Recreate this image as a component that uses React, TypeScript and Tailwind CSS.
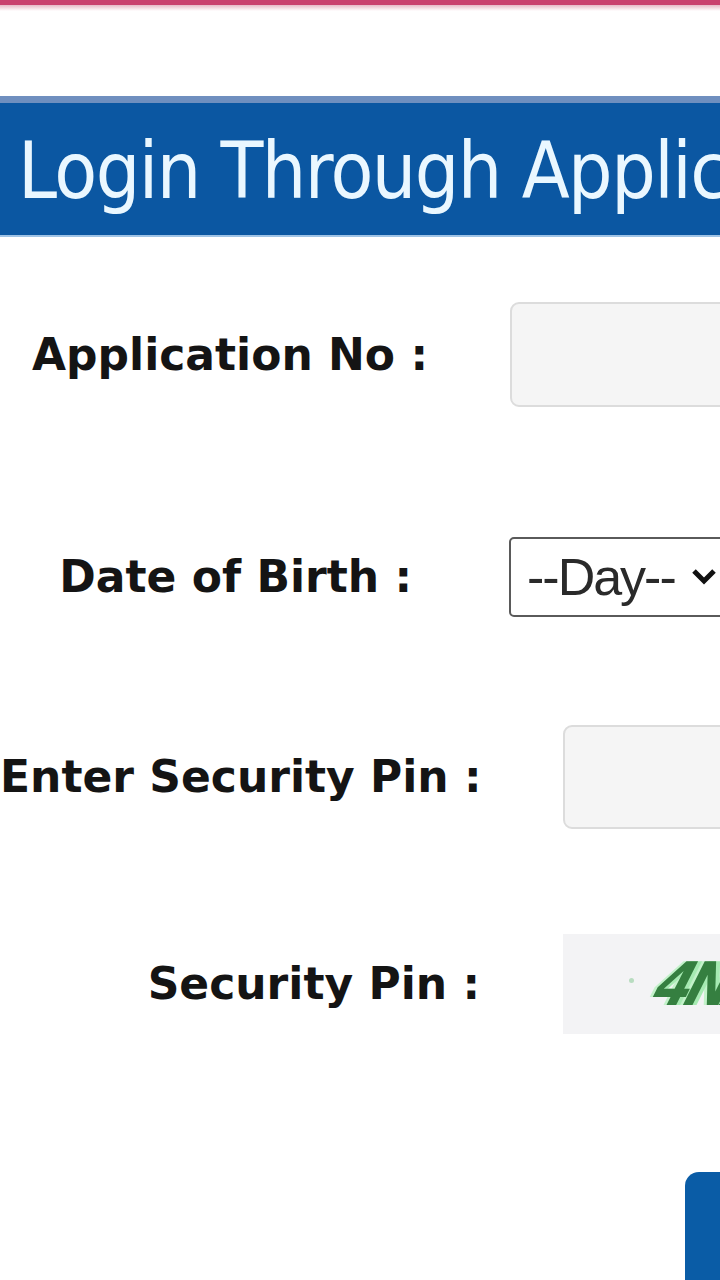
const labelFont = { fontFamily: '"DejaVu Sans", Verdana, sans-serif' };

const Label = ({ text, width }: { text: string; width: string }) => (
    <div className={`${width} shrink-0 text-right font-bold text-[44px] leading-none text-[#141414] whitespace-nowrap`} style={labelFont}>
        {text}
    </div>
);

export default function App() {
    return (
        <div className="w-[720px] h-[1280px] overflow-hidden bg-white flex flex-col">
            <div className="h-[5px] shrink-0 bg-[#c9406e]" />
            <div className="h-[6px] shrink-0 bg-gradient-to-b from-[#e6b8c6] to-white" />

            <div className="mt-[85px] h-[141px] shrink-0 bg-[#0b57a2] border-t-[7px] border-t-[#6f8fbf] border-b-[2px] border-b-[#9fc3e6] flex items-center pl-[18px] overflow-hidden">
                <span
                    className="text-[#eaf7ff] text-[78px] leading-none whitespace-nowrap tracking-[-1.5px] pt-[4px]"
                    style={{ fontFamily: '"DejaVu Sans Condensed", "DejaVu Sans", Verdana, sans-serif', fontStretch: 'condensed' }}
                >
                    Login Through Application No
                </span>
            </div>

            <div className="mt-[65px] h-[105px] shrink-0 flex items-center">
                <Label text="Application No :" width="w-[428px]" />
                <div className="ml-[82px] w-[300px] h-full shrink-0 rounded-[9px] border-[2px] border-[#dcdcdc] bg-[#f5f5f5]" />
            </div>

            <div className="mt-[130px] h-[80px] shrink-0 flex items-center">
                <Label text="Date of Birth :" width="w-[412px]" />
                <div className="ml-[97px] w-[300px] h-full shrink-0 rounded-[5px] border-[2px] border-[#5a5a5a] bg-white flex items-center pl-[16px]">
                    <span className="text-[52px] leading-none text-[#2a2a2a] tracking-[-2px]" style={{ fontFamily: '"Liberation Sans", Arial, sans-serif' }}>
                        --Day--
                    </span>
                    <svg width="26" height="18" viewBox="0 0 26 18" className="ml-[16px]">
                        <path d="M3 3 L13 13 L23 3" fill="none" stroke="#111" strokeWidth="5" />
                    </svg>
                </div>
            </div>

            <div className="mt-[108px] h-[104px] shrink-0 flex items-center">
                <Label text="Enter Security Pin :" width="w-[480px]" />
                <div className="ml-[83px] w-[300px] h-full shrink-0 rounded-[9px] border-[2px] border-[#dcdcdc] bg-[#f5f5f5]" />
            </div>

            <div className="mt-[105px] h-[100px] shrink-0 flex items-center">
                <Label text="Security Pin :" width="w-[480px]" />
                <div className="ml-[83px] w-[300px] h-full shrink-0 bg-[#f3f3f5] relative flex items-center pl-[94px]">
                    <span className="absolute left-[66px] top-[44px] w-[5px] h-[5px] rounded-full bg-[#b8dcc0]" />
                    <span
                        className="italic font-bold text-[60px] leading-none text-[#357f40] -skew-x-[18deg] tracking-[-6px]"
                        style={{ fontFamily: '"DejaVu Sans Condensed", "DejaVu Sans", sans-serif', textShadow: '4px 0 0 #a6eab2, -3px 0 0 #c3f2ca' }}
                    >
                        4NX7
                    </span>
                </div>
            </div>

            <div className="mt-[138px] h-[130px] shrink-0 flex">
                <div className="ml-[685px] w-[200px] h-full shrink-0 rounded-[14px] bg-[#0a5ca6]" />
            </div>
        </div>
    );
}
